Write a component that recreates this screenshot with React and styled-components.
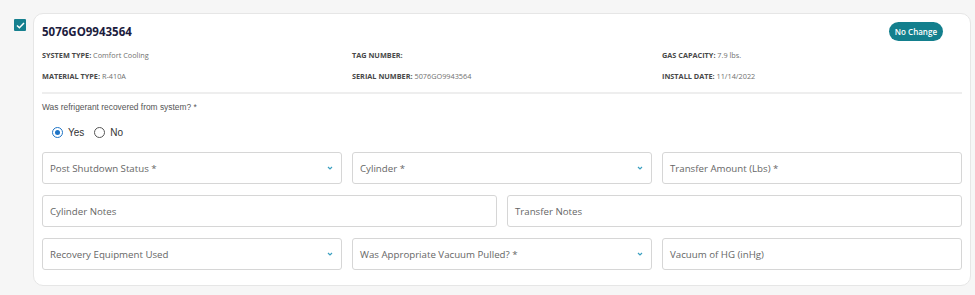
import React from 'react';
import styled, { createGlobalStyle } from 'styled-components';

const GlobalStyle = createGlobalStyle`
  html, body {
    margin: 0;
    padding: 0;
    background: #f6f6f6;
  }
  body {
    font-family: 'Open Sans', 'Liberation Sans', sans-serif;
  }
`;

const Page = styled.div`
  display: flex;
  align-items: flex-start;
  padding: 13px 4px 9px 14px;
  gap: 7px;
`;

const CheckBox = styled.div`
  width: 12px;
  height: 12px;
  margin-top: 6px;
  background: #16808f;
  border-radius: 1px;
  display: flex;
  align-items: center;
  justify-content: center;
  flex-shrink: 0;
`;

const Card = styled.div`
  flex: 1;
  background: #fff;
  border: 1px solid #e6e6e6;
  border-radius: 10px;
  padding: 6px 8px 15px 8px;
`;

const Header = styled.div`
  display: flex;
  justify-content: space-between;
  align-items: center;
  height: 22px;
  margin-bottom: 8px;
`;

const Title = styled.div`
  font-size: 11.5px;
  font-weight: 700;
  color: #1c1c3e;
`;

const Badge = styled.div`
  background: #137f8d;
  color: #fff;
  font-size: 8px;
  font-weight: 600;
  border-radius: 10px;
  padding: 0 6px;
  height: 19px;
  line-height: 19px;
  margin-right: 19px;
  margin-top: 1px;
`;

const InfoGrid = styled.div`
  display: grid;
  grid-template-columns: repeat(3, 1fr);
  column-gap: 10px;
  row-gap: 10px;
  padding-bottom: 10px;
  border-bottom: 2px solid #eeeeee;
`;

const Info = styled.div`
  font-size: 7.3px;
  line-height: 11px;
  color: #707070;
  b {
    font-weight: 700;
    color: #484848;
    text-transform: uppercase;
  }
`;

const Question = styled.div`
  font-family: 'Liberation Sans', Arial, sans-serif;
  font-size: 8.4px;
  color: #555;
  margin-top: 8px;
`;

const Radios = styled.div`
  display: flex;
  align-items: center;
  gap: 10px;
  margin: 12px 0 0 10px;
  height: 16px;
`;

const RadioOption = styled.label`
  display: flex;
  align-items: center;
  gap: 5px;
  font-family: 'Liberation Sans', Arial, sans-serif;
  font-size: 10px;
  color: #333;
`;

const RadioCircle = styled.span`
  width: 9px;
  height: 9px;
  border-radius: 50%;
  border: 1.5px solid ${(p) => (p.checked ? '#1e74c6' : '#555')};
  display: flex;
  align-items: center;
  justify-content: center;
  &::after {
    content: '';
    display: ${(p) => (p.checked ? 'block' : 'none')};
    width: 5px;
    height: 5px;
    border-radius: 50%;
    background: #1e74c6;
  }
`;

const FieldRow = styled.div`
  display: grid;
  grid-template-columns: ${(p) => p.cols};
  gap: 10px;
  margin-top: ${(p) => p.top}px;
`;

const Field = styled.div`
  height: 30px;
  border: 1px solid #d6d6d6;
  border-radius: 3px;
  display: flex;
  align-items: center;
  justify-content: space-between;
  padding: 0 8px 0 7px;
  font-size: 9.7px;
  color: #666;
  box-sizing: content-box;
`;

const Chevron = () => (
  <svg width="6" height="4" viewBox="0 0 6 4">
    <path d="M1 1 L3 3 L5 1" stroke="#3a9fc0" strokeWidth="1.2" fill="none" />
  </svg>
);

const App = () => (
  <>
    <GlobalStyle />
    <Page>
      <CheckBox>
        <svg width="9" height="7" viewBox="0 0 9 7">
          <path d="M1 3.5 L3.4 5.8 L8 1" stroke="#fff" strokeWidth="1.5" fill="none" />
        </svg>
      </CheckBox>
      <Card>
        <Header>
          <Title>5076GO9943564</Title>
          <Badge>No Change</Badge>
        </Header>
        <InfoGrid>
          <Info><b>System Type:</b> Comfort Cooling</Info>
          <Info><b>Tag Number:</b></Info>
          <Info><b>Gas Capacity:</b> 7.9 lbs.</Info>
          <Info><b>Material Type:</b> R-410A</Info>
          <Info><b>Serial Number:</b> 5076GO9943564</Info>
          <Info><b>Install Date:</b> 11/14/2022</Info>
        </InfoGrid>
        <Question>Was refrigerant recovered from system? *</Question>
        <Radios>
          <RadioOption><RadioCircle checked />Yes</RadioOption>
          <RadioOption><RadioCircle />No</RadioOption>
        </Radios>
        <FieldRow cols="1fr 1fr 1fr" top={12}>
          <Field>Post Shutdown Status *<Chevron /></Field>
          <Field>Cylinder *<Chevron /></Field>
          <Field>Transfer Amount (Lbs) *</Field>
        </FieldRow>
        <FieldRow cols="1fr 1fr" top={11}>
          <Field>Cylinder Notes</Field>
          <Field>Transfer Notes</Field>
        </FieldRow>
        <FieldRow cols="1fr 1fr 1fr" top={11}>
          <Field>Recovery Equipment Used<Chevron /></Field>
          <Field>Was Appropriate Vacuum Pulled? *<Chevron /></Field>
          <Field>Vacuum of HG (inHg)</Field>
        </FieldRow>
      </Card>
    </Page>
  </>
);

export default App;
